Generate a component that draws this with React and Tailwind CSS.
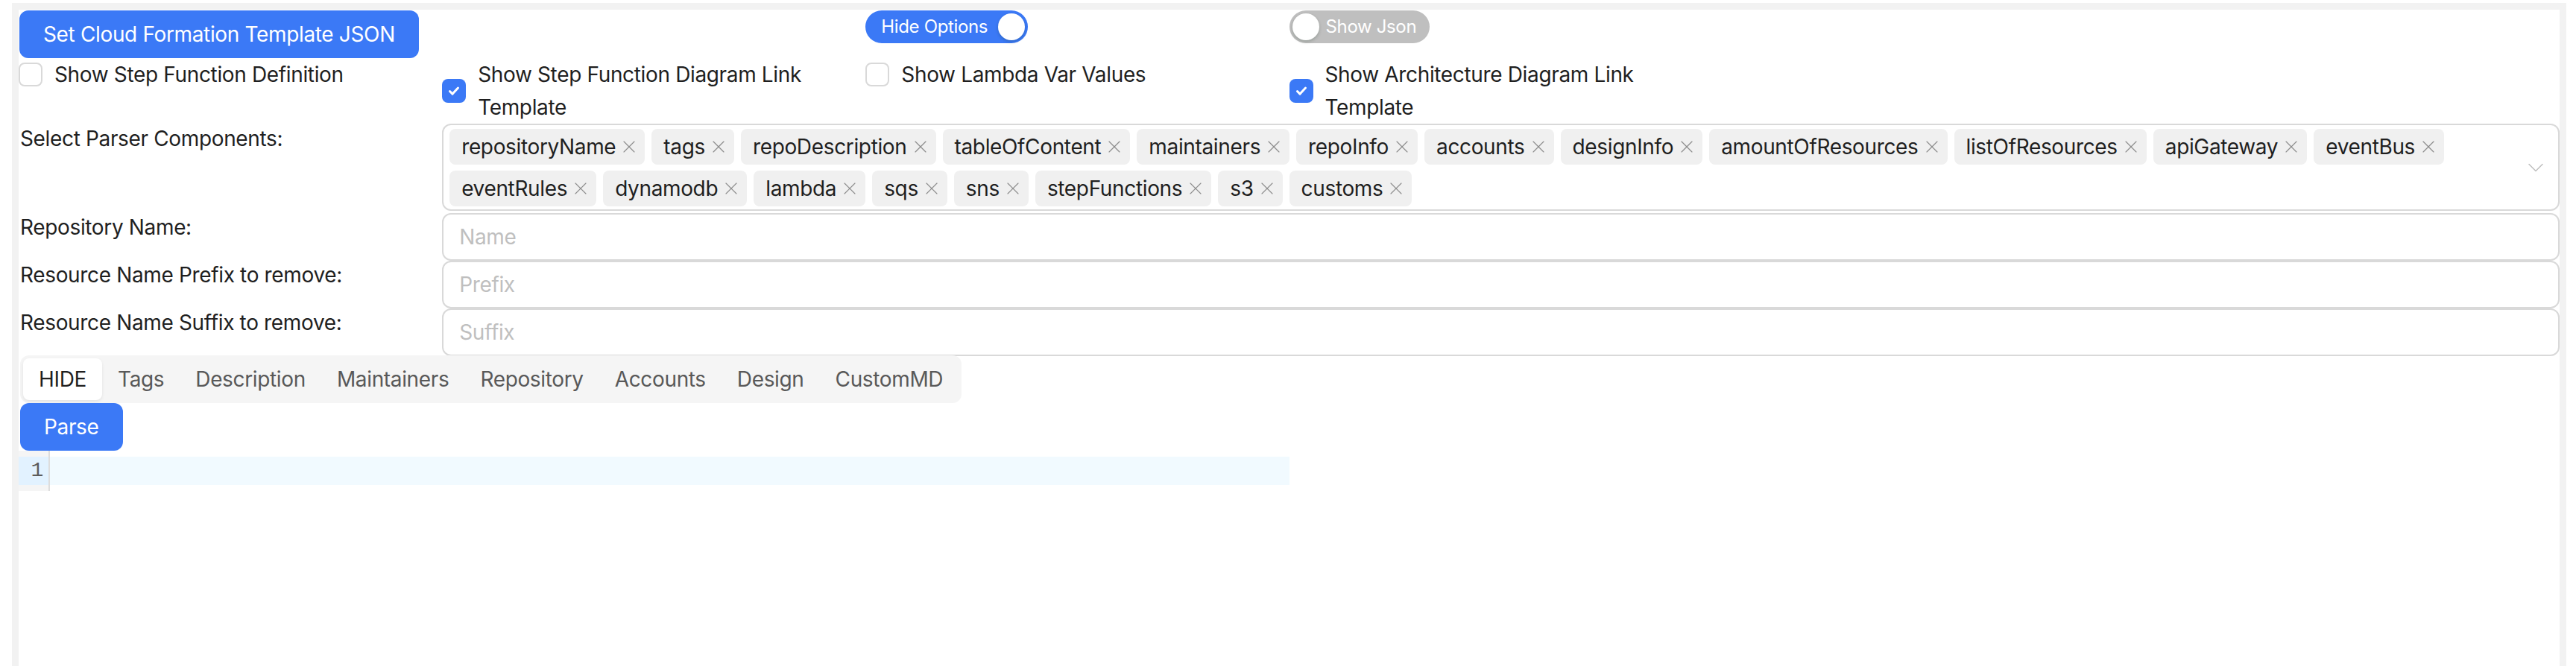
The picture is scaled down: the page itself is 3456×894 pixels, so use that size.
import React from "react";
import { X, ChevronDown } from "lucide-react";

const BLUE = "bg-[#3b79f6]";

const tags = [
	"repositoryName",
	"tags",
	"repoDescription",
	"tableOfContent",
	"maintainers",
	"repoInfo",
	"accounts",
	"designInfo",
	"amountOfResources",
	"listOfResources",
	"apiGateway",
	"eventBus",
	"eventRules",
	"dynamodb",
	"lambda",
	"sqs",
	"sns",
	"stepFunctions",
	"s3",
	"customs",
];

const segments = ["HIDE", "Tags", "Description", "Maintainers", "Repository", "Accounts", "Design", "CustomMD"];

const Check = ({ checked, children }) => (
	<label className="flex items-center">
		{checked ? (
			<span className={`flex h-[32px] w-[32px] shrink-0 items-center justify-center rounded-[8px] ${BLUE}`}>
				<svg width="20" height="20" viewBox="0 0 20 20" fill="none">
					<path d="M4.5 10.5l3.6 3.6 7.4-8" stroke="white" strokeWidth="3" strokeLinecap="round" strokeLinejoin="round" />
				</svg>
			</span>
		) : (
			<span className="h-[32px] w-[32px] shrink-0 rounded-[8px] border-2 border-[#d9d9d9] bg-white" />
		)}
		<span className="px-4">{children}</span>
	</label>
);

const Switch = ({ on, label }) =>
	on ? (
		<div className={`flex h-[44px] w-fit items-center rounded-full ${BLUE} pl-[21px] pr-[4px]`}>
			<span className="text-[24px] leading-none text-white">{label}</span>
			<span className="ml-[14px] h-[36px] w-[36px] rounded-full bg-white shadow-[0_2px_4px_rgba(0,35,11,0.2)]" />
		</div>
	) : (
		<div className="flex h-[44px] w-fit items-center rounded-full bg-[#bfbfbf] pl-[4px] pr-[18px]">
			<span className="mr-[9px] h-[36px] w-[36px] rounded-full bg-white shadow-[0_2px_4px_rgba(0,35,11,0.2)]" />
			<span className="text-[24px] leading-none text-white">{label}</span>
		</div>
	);

const TextRow = ({ label, placeholder }) => (
	<div className="grid grid-cols-6">
		<div className="pl-[2px] leading-[38px]">{label}</div>
		<div className="col-span-5">
			<div className="flex h-[64px] items-center rounded-[12px] border-2 border-[#d9d9d9] bg-white px-[21px] text-[#bfbfbf]">
				{placeholder}
			</div>
		</div>
	</div>
);

export default function App() {
	return (
		<div
			className="min-h-screen bg-white pl-4 pr-[13px] pt-1 text-[28px] leading-[44px] tracking-[-0.35px] text-[#1f1f1f]"
			style={{ fontFamily: "Inter, 'Noto Sans', sans-serif" }}
		>
			<div className="min-h-[890px] bg-[#f2f2f2] px-[9px] pt-[9px]">
				<div className="min-h-[881px] bg-white">
					{/* top row: button + switches */}
					<div className="grid grid-cols-6 pt-[1px]">
						<div className="pl-[1px]">
							<button className={`h-[64px] rounded-[12px] ${BLUE} px-[32px] text-white`}>
								Set Cloud Formation Template JSON
							</button>
						</div>
						<div />
						<div>
							<Switch on label="Hide Options" />
						</div>
						<div>
							<Switch label="Show Json" />
						</div>
					</div>

					{/* checkbox row */}
					<div className="grid grid-cols-6 items-start">
						<Check>Show Step Function Definition</Check>
						<Check checked>Show Step Function Diagram Link Template</Check>
						<Check>Show Lambda Var Values</Check>
						<Check checked>Show Architecture Diagram Link Template</Check>
					</div>

					{/* parser components */}
					<div className="grid grid-cols-6">
						<div className="pl-[2px] leading-[40px]">Select Parser Components:</div>
						<div className="col-span-5">
							<div className="relative rounded-[12px] border-2 border-[#d9d9d9] bg-white pb-[4px] pl-2 pr-[60px] pt-[5px]">
								<div className="flex flex-wrap gap-x-[9px] gap-y-2">
									{tags.map((t) => (
										<span
											key={t}
											className="flex h-[48px] items-center rounded-[8px] bg-[#f0f0f0] pl-4 pr-[7px] text-[28px] leading-[48px]"
										>
											{t}
											<X size={28} strokeWidth={1} className="ml-[4px] text-[#8c8c8c]" />
										</span>
									))}
								</div>
								<ChevronDown
									size={36}
									strokeWidth={1}
									className="absolute right-[12px] top-1/2 -translate-y-1/2 text-[#bfbfbf]"
								/>
							</div>
						</div>
					</div>

					<div className="mt-[3px]">
						<TextRow label="Repository Name:" placeholder="Name" />
						<TextRow label="Resource Name Prefix to remove:" placeholder="Prefix" />
						<TextRow label="Resource Name Suffix to remove:" placeholder="Suffix" />
					</div>

					{/* segmented */}
					<div className="-mt-[1px] pl-[2px]">
						<div className="inline-flex rounded-[12px] bg-[#f5f5f5] p-[4px]">
							{segments.map((s, i) => (
								<div
									key={s}
									className={
										i === 0
											? "h-[56px] rounded-[8px] bg-white px-[21px] leading-[56px] text-[#1f1f1f] shadow-[0_2px_4px_rgba(0,0,0,0.08)]"
											: "h-[56px] rounded-[8px] px-[21px] leading-[56px] text-[#595959]"
									}
								>
									{s}
								</div>
							))}
						</div>
					</div>

					<div className="pl-[2px]">
						<button className={`h-[64px] rounded-[12px] ${BLUE} px-[32px] text-white`}>Parse</button>
					</div>

					{/* editor */}
					<div className="flex w-1/2">
						<div className="w-[42px] border-r-2 border-[#dddddd] bg-[#f5f5f5] py-2">
							<div
								className="h-[38px] bg-[#e2f2ff] pr-[7px] text-right text-[28px] leading-[38px] text-[#5c5c5c]"
								style={{ fontFamily: "'Liberation Mono', monospace" }}
							>
								1
							</div>
						</div>
						<div className="flex-1 py-2">
							<div className="h-[38px] bg-[#f1faff]" />
						</div>
					</div>
				</div>
			</div>
		</div>
	);
}
